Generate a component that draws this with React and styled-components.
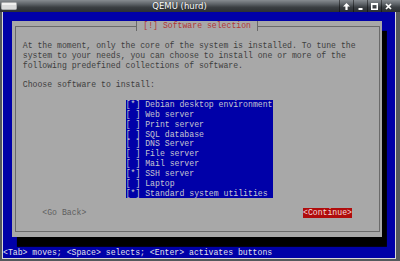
import React from 'react';
import styled, { createGlobalStyle } from 'styled-components';

// the guest screen is an 80x25 text console scaled down
const CW = 4.9;
const RH = 9.84;

const GlobalStyle = createGlobalStyle`
  html, body {
    margin: 0;
    padding: 0;
    background: #000;
  }
  body {
    width: 400px;
    height: 261px;
    overflow: hidden;
  }
`;

const Window = styled.div`
  width: 400px;
  height: 261px;
  display: flex;
  flex-direction: column;
  background: #55595d;
`;

const TitleBar = styled.div`
  height: 12px;
  flex: none;
  display: flex;
  align-items: center;
  background: linear-gradient(#878c91 0%, #5d6267 35%, #3b3f43 60%, #2b2f32 100%);
`;

const AppIcon = styled.div`
  width: 20px;
  height: 12px;
  display: flex;
  align-items: center;
  padding-left: 1px;
  box-sizing: border-box;
`;

const Title = styled.div`
  flex: 1;
  text-align: center;
  color: #fff;
  font-family: 'DejaVu Sans', sans-serif;
  font-size: 8.5px;
  line-height: 12px;
  text-shadow: 0 0 1px rgba(0, 0, 0, 0.6);
`;

const Controls = styled.div`
  display: flex;
  padding-right: 5px;
`;

const CtrlButton = styled.div`
  width: 14px;
  height: 12px;
  display: flex;
  align-items: center;
  justify-content: center;
  box-sizing: border-box;
  border-left: 1px solid rgba(0, 0, 0, 0.45);
`;

const Frame = styled.div`
  flex: 1;
  display: flex;
  padding: 0 4px 2px 2px;
`;

const Screen = styled.div`
  flex: 1;
  display: flex;
  flex-direction: column;
  background: #0000a8;
  border: 1px solid #d8d8d8;
  border-top: none;
  font-family: 'Liberation Mono', 'DejaVu Sans Mono', monospace;
  font-size: 8.165px;
  line-height: ${RH}px;
`;

const Dialog = styled.div`
  margin: 8.7px 0 0 9.3px;
  width: 369.7px;
  height: 216.5px;
  box-sizing: border-box;
  padding: 4.9px 2.45px;
  display: flex;
  background: #a8a8a8;
  box-shadow: ${CW}px ${RH}px 0 #000;
`;

const Box = styled.div`
  flex: 1;
  display: flex;
  flex-direction: column;
  border: 1px solid #6a6a6a;
  padding: 0 7px;
`;

const TitleRow = styled.div`
  display: flex;
  justify-content: center;
  margin-top: -5.4px;
  height: ${RH}px;
`;

const TitleTab = styled.div`
  background: #a8a8a8;
  color: #b23636;
  border-left: 1px solid #6a6a6a;
  border-right: 1px solid #6a6a6a;
  padding: 0 6.35px;
  white-space: pre;
`;

const Message = styled.div`
  margin-top: 10px;
  color: #3e3e3e;
  white-space: pre;
`;

const ListBox = styled.div`
  margin: ${RH}px 0 0 ${21 * CW}px;
  width: ${30 * CW}px;
  background: #0000a8;
  color: #c6c6d0;
`;

const ListItem = styled.div`
  height: ${RH}px;
  white-space: pre;
`;

const ButtonRow = styled.div`
  margin-top: ${RH}px;
  height: ${RH}px;
  display: flex;
  justify-content: space-between;
  padding: 0 ${4 * CW}px;
`;

const Button = styled.span`
  white-space: pre;
  background: ${(p) => (p.$active ? '#b00c0c' : 'transparent')};
  color: ${(p) => (p.$active ? '#f2dada' : '#5e5e5e')};
`;

const StatusLine = styled.div`
  margin-top: auto;
  height: ${RH}px;
  color: #e2e2ea;
  white-space: pre;
`;

const packages = [
  { name: 'Debian desktop environment', on: true },
  { name: 'Web server', on: false },
  { name: 'Print server', on: false },
  { name: 'SQL database', on: false },
  { name: 'DNS Server', on: false },
  { name: 'File server', on: false },
  { name: 'Mail server', on: false },
  { name: 'SSH server', on: true },
  { name: 'Laptop', on: false },
  { name: 'Standard system utilities', on: true },
];

const App = () => {
  return (
    <Window>
      <GlobalStyle />
      <TitleBar>
        <AppIcon>
          <svg width="16" height="8" viewBox="0 0 16 8">
            <rect x="0.5" y="0.5" width="15" height="7" rx="1" fill="#d9dadb" stroke="#a9abad" />
            <rect x="1" y="1" width="14" height="2" fill="#f0f0f0" />
          </svg>
        </AppIcon>
        <Title>QEMU (hurd)</Title>
        <Controls>
          <CtrlButton>
            <svg width="7" height="7" viewBox="0 0 7 7">
              <path d="M3.5 0 L7 3.5 H4.6 V7 H2.4 V3.5 H0 Z" fill="#fff" />
            </svg>
          </CtrlButton>
          <CtrlButton>
            <svg width="7" height="7" viewBox="0 0 7 7">
              <rect x="1.5" y="5" width="4" height="2" fill="#fff" />
            </svg>
          </CtrlButton>
          <CtrlButton>
            <svg width="7" height="7" viewBox="0 0 7 7">
              <rect x="0.75" y="0.75" width="5.5" height="5.5" fill="none" stroke="#fff" strokeWidth="1.5" />
              <rect x="0" y="0" width="7" height="2" fill="#fff" />
            </svg>
          </CtrlButton>
          <CtrlButton>
            <svg width="7" height="7" viewBox="0 0 7 7">
              <path d="M1 1 L6 6 M6 1 L1 6" stroke="#fff" strokeWidth="1.7" />
            </svg>
          </CtrlButton>
        </Controls>
      </TitleBar>
      <Frame>
        <Screen>
          <Dialog>
            <Box>
              <TitleRow>
                <TitleTab>[!] Software selection</TitleTab>
              </TitleRow>
              <Message>
                {'At the moment, only the core of the system is installed. To tune the\n'}
                {'system to your needs, you can choose to install one or more of the\n'}
                {'following predefined collections of software.\n'}
                {'\n'}
                {'Choose software to install:'}
              </Message>
              <ListBox>
                {packages.map((p) => (
                  <ListItem key={p.name}>{`[${p.on ? '*' : ' '}] ${p.name}`}</ListItem>
                ))}
              </ListBox>
              <ButtonRow>
                <Button>{'<Go Back>'}</Button>
                <Button $active>{'<Continue>'}</Button>
              </ButtonRow>
            </Box>
          </Dialog>
          <StatusLine>{'<Tab> moves; <Space> selects; <Enter> activates buttons'}</StatusLine>
        </Screen>
      </Frame>
    </Window>
  );
};

export default App;
